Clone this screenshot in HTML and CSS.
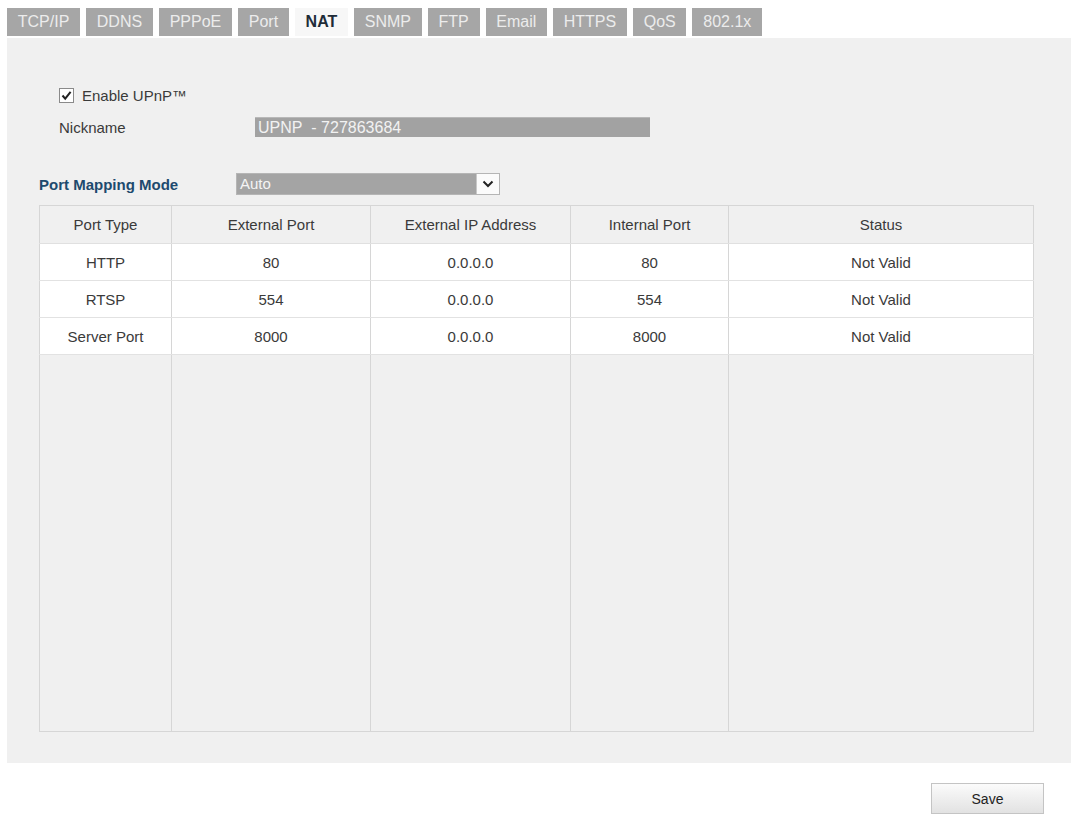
FILE: index.html
```html
<!DOCTYPE html>
<html lang="en">
<head>
<meta charset="utf-8">
<title>NAT</title>
<link rel="stylesheet" href="styles.css">
</head>
<body>
<div class="tabs">
  <span class="tab">TCP/IP</span>
  <span class="tab">DDNS</span>
  <span class="tab">PPPoE</span>
  <span class="tab">Port</span>
  <span class="tab active">NAT</span>
  <span class="tab">SNMP</span>
  <span class="tab">FTP</span>
  <span class="tab">Email</span>
  <span class="tab">HTTPS</span>
  <span class="tab">QoS</span>
  <span class="tab">802.1x</span>
</div>
<div class="panel">
  <div class="upnp">
    <label class="check-row">
      <span class="checkbox">
        <svg width="13" height="13" viewBox="0 0 13 13"><path d="M2.5 6.5 L5.2 9.6 L10.6 2.8" fill="none" stroke="#222" stroke-width="2"/></svg>
      </span>
      <span>Enable UPnP™</span>
    </label>
    <div class="field-row">
      <span class="label">Nickname</span>
      <span class="nick-input">UPNP&nbsp;&nbsp;- 727863684</span>
    </div>
  </div>
  <div class="field-row mode-row">
    <span class="label mode-label">Port Mapping Mode</span>
    <span class="select">
      <span class="select-value">Auto</span>
      <span class="select-btn">
        <svg width="12" height="8" viewBox="0 0 12 8"><path d="M1.5 1.5 L6 6 L10.5 1.5" fill="none" stroke="#222" stroke-width="2"/></svg>
      </span>
    </span>
  </div>
  <table class="grid">
    <colgroup>
      <col class="c1"><col class="c2"><col class="c3"><col class="c4"><col class="c5">
    </colgroup>
    <thead>
      <tr><th>Port Type</th><th>External Port</th><th>External IP Address</th><th>Internal Port</th><th>Status</th></tr>
    </thead>
    <tbody>
      <tr><td>HTTP</td><td>80</td><td>0.0.0.0</td><td>80</td><td>Not Valid</td></tr>
      <tr><td>RTSP</td><td>554</td><td>0.0.0.0</td><td>554</td><td>Not Valid</td></tr>
      <tr><td>Server Port</td><td>8000</td><td>0.0.0.0</td><td>8000</td><td>Not Valid</td></tr>
      <tr class="filler"><td></td><td></td><td></td><td></td><td></td></tr>
    </tbody>
  </table>
</div>
<div class="actions">
  <button class="save" type="button">Save</button>
</div>
</body>
</html>
```

FILE: styles.css
```css
html, body {
  margin: 0;
  padding: 0;
  background: #ffffff;
  font-family: "Liberation Sans", Arial, sans-serif;
  color: #3a3a3a;
}

.tabs {
  display: flex;
  gap: 6px;
  padding: 8px 0 0 7px;
  height: 28px;
}

.tab {
  display: flex;
  align-items: center;
  height: 28px;
  padding: 0 10.75px;
  background: #a6a6a6;
  color: #ececec;
  font-size: 16px;
  box-sizing: border-box;
}

.tab.active {
  background: #f7f7f7;
  color: #1e2c38;
  font-weight: bold;
}

.panel {
  margin: 2px 0 0 7px;
  width: 1064px;
  height: 725px;
  box-sizing: border-box;
  background: #f0f0f0;
  padding: 46px 38px 26px 32px;
  display: flex;
  flex-direction: column;
}

.upnp {
  padding-left: 20px;
  display: flex;
  flex-direction: column;
}

.check-row {
  display: flex;
  align-items: center;
  gap: 8px;
  height: 22px;
  font-size: 15px;
}

.checkbox {
  width: 13px;
  height: 13px;
  border: 1px solid #8a8a8a;
  background: #fff;
  display: flex;
  align-items: center;
  justify-content: center;
}

.checkbox svg {
  display: block;
}

.field-row {
  display: flex;
  align-items: center;
  font-size: 15px;
}

.upnp .field-row {
  margin-top: 11px;
  height: 20px;
}

.label {
  width: 196px;
  flex: none;
}

.nick-input {
  width: 395px;
  height: 20px;
  box-sizing: border-box;
  background: #a2a2a2;
  border-top: 1px solid #b8b8b8;
  color: #f2f2f2;
  font-size: 16px;
  line-height: 19px;
  padding-left: 3px;
}

.mode-row {
  margin-top: 36px;
  height: 22px;
}

.mode-label {
  width: 197px;
  font-weight: bold;
  color: #1d4a6e;
  font-size: 15px;
}

.select {
  display: flex;
  width: 264px;
  height: 22px;
  background: #a4a4a4;
  border: 1px solid #b5b5b5;
  box-sizing: border-box;
}

.select-value {
  flex: 1;
  color: #f4f4f4;
  font-size: 15px;
  line-height: 20px;
  padding-left: 3px;
}

.select-btn {
  width: 22px;
  background: #fbfbfb;
  border-left: 1px solid #c8c8c8;
  display: flex;
  align-items: center;
  justify-content: center;
}

.grid {
  margin-top: 10px;
  width: 994px;
  height: 527px;
  border-collapse: collapse;
  table-layout: fixed;
  font-size: 15px;
  border: 1px solid #d6d6d6;
}

.c1 { width: 132px; }
.c2 { width: 199px; }
.c3 { width: 200px; }
.c4 { width: 158px; }
.c5 { width: 305px; }

.grid th {
  font-weight: normal;
  height: 37px;
  background: #f0f0f0;
  border-left: 1px solid #d6d6d6;
  border-bottom: 1px solid #e0e0e0;
  text-align: center;
  padding: 0;
}

.grid td {
  height: 36px;
  background: #ffffff;
  border-left: 1px solid #d6d6d6;
  border-bottom: 1px solid #e2e2e2;
  text-align: center;
  padding: 0;
}

.grid tr.filler td {
  height: auto;
  background: #f0f0f0;
  border-bottom: none;
}

.actions {
  display: flex;
  justify-content: flex-end;
  padding: 20px 32px 0 0;
}

.save {
  width: 113px;
  height: 31px;
  font-family: "Liberation Sans", Arial, sans-serif;
  font-size: 14px;
  color: #222;
  background: linear-gradient(#fbfbfb, #e2e2e2);
  border: 1px solid #c4c4c4;
  border-radius: 0;
  padding: 0;
}
```
